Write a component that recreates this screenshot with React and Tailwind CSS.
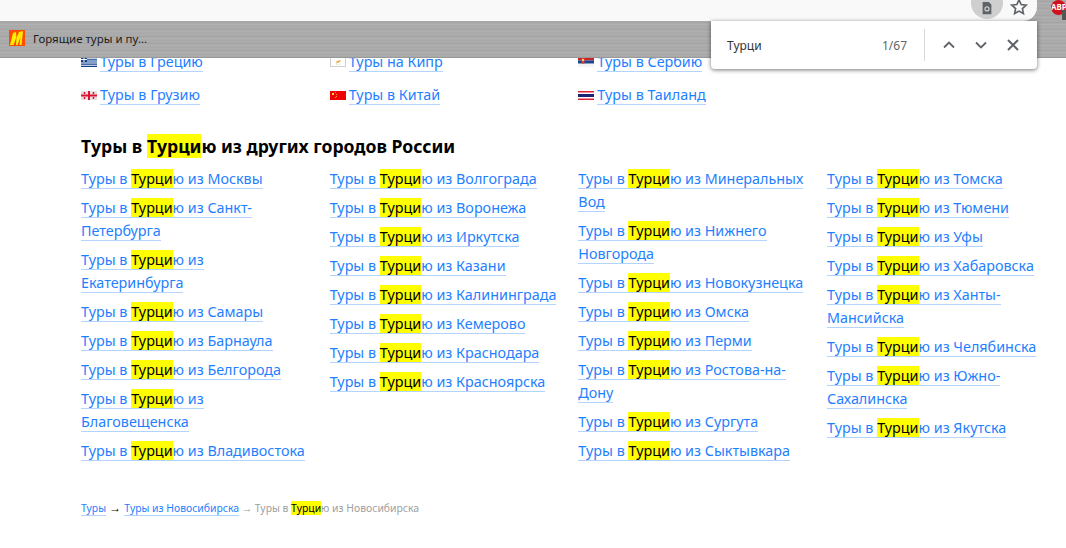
const cols = [
  ["Москвы","Санкт-Петербурга","Екатеринбурга","Самары","Барнаула","Белгорода","Благовещенска","Владивостока"],
  ["Волгограда","Воронежа","Иркутска","Казани","Калининграда","Кемерово","Краснодара","Красноярска"],
  ["Минеральных Вод","Нижнего Новгорода","Новокузнецка","Омска","Перми","Ростова-на-Дону","Сургута","Сыктывкара"],
  ["Томска","Тюмени","Уфы","Хабаровска","Ханты-Мансийска","Челябинска","Южно-Сахалинска","Якутска"],
];

const Hl = () => <span className="bg-[#ffff00] text-black">Турци</span>;

const flags = {
  gr: <svg viewBox="0 0 16 10" className="w-4 h-[10px]"><rect width="16" height="10" fill="#fff"/><path d="M0 .6h16M0 2.800h16M0 5h16M0 7.200h16M0 9.400h16" stroke="#0d3f8f" strokeWidth="1.200"/><rect width="6" height="5" fill="#0d3f8f"/><path d="M3 0v5M0 2.500h6" stroke="#fff"/></svg>,
  cy: <svg viewBox="0 0 16 10" className="w-4 h-[10px]"><rect x=".5" y=".5" width="15" height="9" fill="#fff" stroke="#cfcfcf"/><path d="M5.500 5l4.500-2 .8 1-2.300 1.500-1 .5z" fill="#f0a030"/><path d="M6 7h1M8.500 7h1" stroke="#a8c8a0"/></svg>,
  rs: <svg viewBox="0 0 16 10" className="w-4 h-[10px]"><rect width="16" height="3.400" fill="#d0202c"/><rect y="3.400" width="16" height="3.300" fill="#17458f"/><rect y="6.700" width="16" height="3.300" fill="#f4f4f4"/><rect x="3.500" y="1" width="3" height="5.500" fill="#e04030"/><rect x="4" y="2" width="2" height="2" fill="#f0d060"/></svg>,
  ge: <svg viewBox="0 0 16 9" className="w-4 h-[9px]"><rect width="16" height="9" fill="#e4e4e6"/><path d="M8 0v9M0 4.500h16" stroke="#e01030" strokeWidth="2"/><path d="M3.500 1v2M2.500 2h2M12.500 1v2M11.500 2h2M3.500 6v2M2.500 7h2M12.500 6v2M11.500 7h2" stroke="#e01030"/></svg>,
  cn: <svg viewBox="0 0 16 9" className="w-4 h-[9px]"><rect width="16" height="9" fill="#f00000"/><rect x="2" y="2" width="2" height="2" fill="#ffd83c"/><path d="M5 1h1v1H5zM6 3h1v1H6zM6 5h1v1H6zM5 6h1v1H5z" fill="#f6a030"/></svg>,
  th: <svg viewBox="0 0 16 9" className="w-4 h-[9px]"><rect width="16" height="9" fill="#fff"/><rect width="16" height="1.500" fill="#e0223a"/><rect y="7.500" width="16" height="1.500" fill="#e0223a"/><rect y="3" width="16" height="3" fill="#1a2470"/></svg>,
};

function FlagLink({ flag, children }) {
  return (
    <div className="w-[248.67px] shrink-0 flex">
      <div className="w-[19px] h-[23px] pt-px flex items-center shrink-0">{flags[flag]}</div>
      <div><a className="text-[#1f80ff] border-b border-[#b3d4ff]">{children}</a></div>
    </div>
  );
}

export default function App() {
  return (
    <div className="relative w-[1066px] h-[548px] overflow-hidden bg-white text-[14.35px] leading-[23px] font-['Liberation_Sans',sans-serif]">
      {/* browser chrome over the page */}
      <div className="absolute inset-x-0 top-0 z-10 h-[58px] border-b border-[#999] bg-[repeating-linear-gradient(180deg,#ababab_0px,#a3a3a3_2px,#b3b3b3_3px,#a8a8a8_5px,#aeaeae_7px)]">
        <div className="h-[21px] w-[1037px] bg-[#f9f9f9] rounded-br-[14px]" />
        <div className="h-[36px] flex items-center pl-[9px] pb-[2px]">
          <svg viewBox="0 0 16 16" className="w-4 h-4">
            <rect width="16" height="16" fill="#ff4b00" />
            <path d="M1 15L4 3l3-1 .5 6L10 2l4-1-1.500 14h-2l1-8-3 8H7l.5-8-3 8z" fill="#ffee00" />
          </svg>
          <span className="ml-2 text-[11.5px] text-[#1c1c1c] font-['Noto_Sans',sans-serif]">Горящие туры и пу...</span>
        </div>
        <div className="absolute top-0 left-[971px] w-8 h-[19px] rounded-b-full bg-[#cfcfcf] flex items-start justify-center">
          <svg viewBox="0 0 16 16" className="w-[14px] h-[14px] mt-px">
            <path d="M3 1h7l3 3v11H3z" fill="#5f6368" />
            <circle cx="8" cy="9" r="2.300" fill="none" stroke="#cfcfcf" strokeWidth="1.400" />
          </svg>
        </div>
        <svg viewBox="0 0 24 24" className="absolute top-[-3px] left-[1009px] w-5 h-5 text-[#5f6368]" fill="none" stroke="currentColor" strokeWidth="2">
          <path d="M12 3.500l2.600 5.600 6 .7-4.500 4.100 1.200 6-5.300-3-5.300 3 1.200-6L3.400 9.800l6-.7z" />
        </svg>
        <div className="absolute top-0 left-[1051px] w-[15px] h-[15px] rounded-full bg-[#d0101a] text-white text-[8px] leading-[13px] font-bold overflow-hidden">ABP</div>
        <div className="absolute top-[10px] left-[1062px] w-1 h-[10px] bg-[#555]" />
      </div>

      {/* find bar */}
      <div className="absolute left-[711px] top-[21px] z-20 w-[326px] h-[48px] bg-white rounded-b-[4px] shadow-[0_1px_4px_rgba(0,0,0,0.55)] flex items-center font-['Noto_Sans',sans-serif] text-[12px]">
        <span className="ml-4 w-[142px] text-[#333]">Турци</span>
        <span className="w-[38px] text-right text-[#666]">1/67</span>
        <div className="ml-[17px] h-8 border-l border-[#d8d8d8]" />
        <svg viewBox="0 0 16 16" className="ml-4 w-4 h-4" fill="none" stroke="#5f6368" strokeWidth="1.800"><path d="M3 10.500l5-5 5 5" /></svg>
        <svg viewBox="0 0 16 16" className="ml-4 w-4 h-4" fill="none" stroke="#5f6368" strokeWidth="1.800"><path d="M3 5.500l5 5 5-5" /></svg>
        <svg viewBox="0 0 16 16" className="ml-4 w-4 h-4" fill="none" stroke="#5f6368" strokeWidth="2"><path d="M3 3l10 10M13 3L3 13" /></svg>
      </div>

      {/* page */}
      <div className="pl-[81px] pt-[50px]">
        <div className="flex">
          <FlagLink flag="gr">Туры в Грецию</FlagLink>
          <FlagLink flag="cy">Туры на Кипр</FlagLink>
          <FlagLink flag="rs">Туры в Сербию</FlagLink>
        </div>
        <div className="flex mt-[10px]">
          <FlagLink flag="ge">Туры в Грузию</FlagLink>
          <FlagLink flag="cn">Туры в Китай</FlagLink>
          <FlagLink flag="th">Туры в Таиланд</FlagLink>
        </div>

        <h2 className="mt-[28px] text-[17.6px] leading-[24px] font-bold text-black font-['Noto_Sans',sans-serif]">
          Туры в <Hl />ю из других городов России
        </h2>

        <div className="flex mt-[9px]">
          {cols.map((col, i) => (
            <div key={i} className="w-[248.67px] shrink-0 pr-[21.6px] flex flex-col gap-[6px]">
              {col.map((city) => (
                <div key={city}>
                  <a className="text-[#1f80ff] border-b border-[#b3d4ff]">
                    Туры в <Hl />ю из {city}
                  </a>
                </div>
              ))}
            </div>
          ))}
        </div>

        <div className="mt-[38px] text-[10.4px] leading-[16px] text-[#a0a0a0]">
          <a className="text-[#1f80ff] border-b border-[#b3d4ff]">Туры</a>
          <span className="text-black text-[12px] font-bold"> → </span>
          <a className="text-[#1f80ff] border-b border-[#b3d4ff]">Туры из Новосибирска</a>
          {" → Туры в "}
          <Hl />ю из Новосибирска
        </div>
      </div>
    </div>
  );
}
